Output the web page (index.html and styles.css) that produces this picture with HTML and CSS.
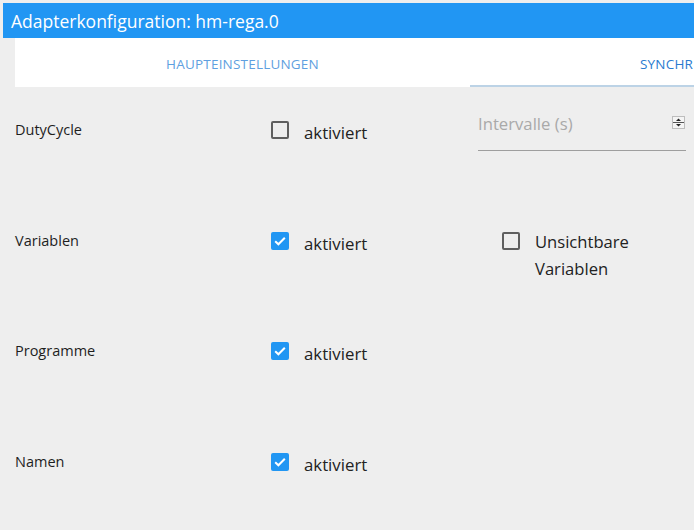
FILE: index.html
```html
<!DOCTYPE html>
<html>
<head>
<meta charset="utf-8">
<link rel="stylesheet" href="styles.css">
</head>
<body>
<div class="page">
  <div class="header">Adapterkonfiguration: hm-rega.0</div>
  <div class="tabs">
    <div class="tab tab-main">HAUPTEINSTELLUNGEN</div>
    <div class="tab tab-sync">SYNCHR</div>
  </div>
  <div class="rows">
    <div class="row">
      <div class="label">DutyCycle</div>
      <div class="check"><span class="box"></span><span class="ctext">aktiviert</span></div>
      <div class="field">
        <div class="input">
          <span class="placeholder">Intervalle (s)</span>
          <span class="spin"><svg width="13" height="13" viewBox="0 0 13 13"><rect x="0.5" y="0.5" width="12" height="12" fill="#f4f4f4" stroke="#bdbdbd"/><line x1="1" y1="6.5" x2="12" y2="6.5" stroke="#555"/><path d="M4 5 L6.5 2.5 L9 5 Z" fill="#222"/><path d="M4 8 L6.5 10.5 L9 8 Z" fill="#222"/></svg></span>
        </div>
      </div>
    </div>
    <div class="row">
      <div class="label">Variablen</div>
      <div class="check"><span class="box checked"><svg width="18" height="18" viewBox="0 0 18 18"><path d="M4.2 9.2 L7.4 12.3 L13.8 5.8" fill="none" stroke="#fff" stroke-width="2"/></svg></span><span class="ctext">aktiviert</span></div>
      <div class="extra"><span class="box"></span><span class="ctext multi">Unsichtbare<br>Variablen</span></div>
    </div>
    <div class="row">
      <div class="label">Programme</div>
      <div class="check"><span class="box checked"><svg width="18" height="18" viewBox="0 0 18 18"><path d="M4.2 9.2 L7.4 12.3 L13.8 5.8" fill="none" stroke="#fff" stroke-width="2"/></svg></span><span class="ctext">aktiviert</span></div>
    </div>
    <div class="row">
      <div class="label">Namen</div>
      <div class="check"><span class="box checked"><svg width="18" height="18" viewBox="0 0 18 18"><path d="M4.2 9.2 L7.4 12.3 L13.8 5.8" fill="none" stroke="#fff" stroke-width="2"/></svg></span><span class="ctext">aktiviert</span></div>
    </div>
  </div>
</div>
</body>
</html>
```
FILE: styles.css
```css
html, body {
  margin: 0;
  padding: 0;
  background: #eeeeee;
  overflow: hidden;
}
.page {
  padding: 3px 0 0 3px;
  font-family: "Open Sans", "Noto Sans", sans-serif;
  width: 691px;
  height: 527px;
  overflow: hidden;
}
.header {
  height: 35px;
  background: #2196f3;
  color: #fff;
  font-size: 17.5px;
  line-height: 36px;
  padding-left: 8px;
  white-space: nowrap;
}
.tabs {
  margin-left: 12px;
  height: 49px;
  background: #fff;
  display: flex;
}
.tab {
  font-size: 13.5px;
  letter-spacing: 0.2px;
  display: flex;
  align-items: center;
  box-sizing: border-box;
  padding-top: 2px;
}
.tab-main {
  width: 455px;
  justify-content: center;
  color: #5f9fe0;
}
.tab-sync {
  flex: 1;
  padding-left: 170px;
  color: #2a7bd0;
  border-bottom: 2px solid #bcd3e6;
  padding-top: 4px;
  white-space: nowrap;
  overflow: hidden;
}
.rows {
  padding-top: 33px;
}
.row {
  height: 110.67px;
  display: grid;
  grid-template-columns: 255px 200px 1fr;
  padding-left: 12px;
  align-items: start;
}
.row:last-child {
  height: auto;
}
.label {
  font-size: 14.5px;
  color: #1e1e1e;
  line-height: 18px;
  padding-top: 1px;
}
.check, .extra {
  display: flex;
  align-items: flex-start;
}
.box {
  width: 18px;
  height: 18px;
  box-sizing: border-box;
  border: 2px solid #5f5f5f;
  border-radius: 2px;
  flex: none;
  margin: 1px 0 0 1px;
}
.box.checked {
  border: none;
  background: #2196f3;
}
.box svg {
  display: block;
}
.ctext {
  font-size: 16.8px;
  color: #222;
  margin-left: 15px;
  line-height: 24px;
  margin-top: 1px;
}
.ctext.multi {
  font-size: 16.6px;
  line-height: 27px;
  margin-top: -3px;
}
.extra {
  padding-left: 31px;
}
.field {
  padding-left: 8px;
  margin-top: -13px;
}
.input {
  width: 208px;
  height: 44px;
  box-sizing: border-box;
  border-bottom: 1px solid #9e9e9e;
  display: flex;
  justify-content: space-between;
  align-items: flex-start;
}
.placeholder {
  font-size: 16.7px;
  color: #a9a9a9;
  line-height: 24px;
  padding-top: 5px;
}
.spin {
  margin-top: 9px;
  margin-right: 1px;
}
.spin svg {
  display: block;
}
```
